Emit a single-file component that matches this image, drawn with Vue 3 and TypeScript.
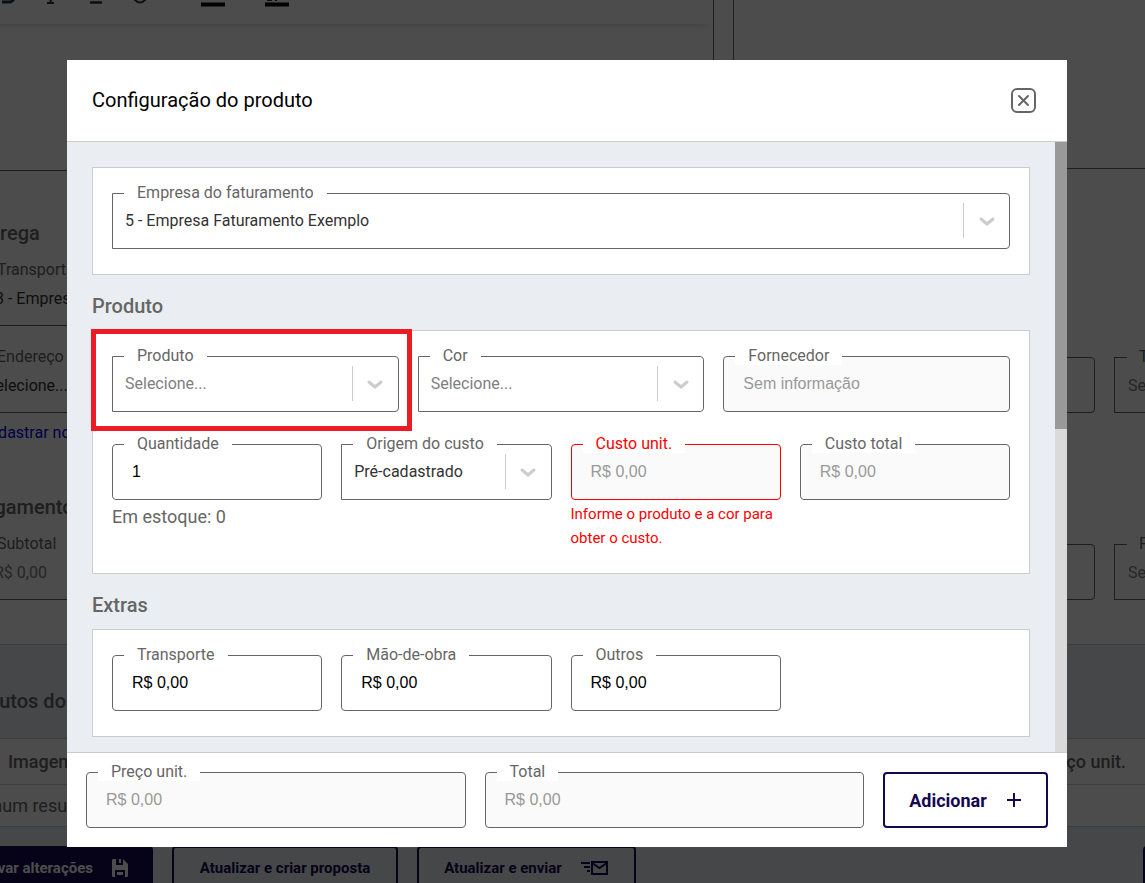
<script setup lang="ts">
import { ref } from 'vue'

interface Field {
  id: string
  label: string
  value: string
  kind: 'select' | 'text'
  muted?: boolean
  disabled?: boolean
  error?: string
  hint?: string
  marked?: boolean
}

const company: Field[] = [
  { id: 'company', label: 'Empresa do faturamento', value: '5 - Empresa Faturamento Exemplo', kind: 'select' },
]
const product: Field[] = [
  { id: 'product', label: 'Produto', value: 'Selecione...', kind: 'select', muted: true, marked: true },
  { id: 'color', label: 'Cor', value: 'Selecione...', kind: 'select', muted: true },
  { id: 'supplier', label: 'Fornecedor', value: 'Sem informação', kind: 'text', disabled: true },
]
const cost: Field[] = [
  { id: 'quantity', label: 'Quantidade', value: '1', kind: 'text', hint: 'Em estoque: 0' },
  { id: 'origin', label: 'Origem do custo', value: 'Pré-cadastrado', kind: 'select' },
  {
    id: 'unit-cost',
    label: 'Custo unit.',
    value: 'R$ 0,00',
    kind: 'text',
    disabled: true,
    error: 'Informe o produto e a cor para obter o custo.',
  },
  { id: 'total-cost', label: 'Custo total', value: 'R$ 0,00', kind: 'text', disabled: true },
]
const extras: Field[] = [
  { id: 'freight', label: 'Transporte', value: 'R$ 0,00', kind: 'text' },
  { id: 'labor', label: 'Mão-de-obra', value: 'R$ 0,00', kind: 'text' },
  { id: 'others', label: 'Outros', value: 'R$ 0,00', kind: 'text' },
]
const totals: Field[] = [
  { id: 'unit-price', label: 'Preço unit.', value: 'R$ 0,00', kind: 'text', disabled: true },
  { id: 'total', label: 'Total', value: 'R$ 0,00', kind: 'text', disabled: true },
]

const sections = [
  { title: '', rows: [{ cols: 'one', fields: company }] },
  { title: 'Produto', rows: [{ cols: 'three', fields: product }, { cols: 'four', fields: cost }] },
  { title: 'Extras', rows: [{ cols: 'four', fields: extras }] },
]

const open = ref(true)
</script>

<template>
  <div class="screen">
    <main class="page">
      <div class="editors">
        <div class="editor">
          <div class="toolbar">
            <svg width="300" height="24" viewBox="0 0 300 24" fill="none" stroke="#2b3640" stroke-width="2">
              <path d="M2 2h8q4-1 4-5" stroke-width="3" />
              <path d="M47 3h7M50 3l2-6" />
              <path d="M90 2.500h12" stroke-width="2.500" />
              <path d="M134-1q6 7 12 0" />
              <path d="M201 4.500h24M265 4.500h24" stroke="#000" stroke-width="4" />
              <path d="M267 0h5M275 0h2" />
            </svg>
          </div>
        </div>
        <div class="editor side"></div>
      </div>

      <section class="delivery">
        <h2>Entrega</h2>
        <div class="back-row">
          <div class="back-field wide"><span class="tag">Transportadora</span><span>13 - Empresa</span></div>
        </div>
        <div class="back-row">
          <div class="back-field"><span class="tag">Endereço</span><span>Selecione...</span></div>
          <div class="back-field narrow"><span class="tag">Tipo</span><span class="soft">Selecione...</span></div>
        </div>
        <a href="#">Cadastrar novo endereço</a>
      </section>

      <section class="payment">
        <h2>Pagamento</h2>
        <div class="back-row">
          <div class="back-field"><span class="tag">Subtotal</span><span class="soft money">R$ 0,00</span></div>
          <div class="back-field narrow"><span class="tag">Forma</span><span class="soft">Selecione...</span></div>
        </div>
      </section>

      <section class="items">
        <h2>Produtos do orçamento</h2>
        <table>
          <thead>
            <tr><th>Imagem</th><th class="end">Preço unit.</th></tr>
          </thead>
          <tbody>
            <tr><td colspan="2">Nenhum resultado</td></tr>
          </tbody>
        </table>
        <div class="actions">
          <button type="button" class="act filled">
            Salvar alterações
            <svg width="16" height="18" viewBox="0 0 16 18">
              <path fill="#fff" fill-rule="evenodd" d="M1 0h10l5 5v12q0 1-1 1H1q-1 0-1-1V1q0-1 1-1zM4 0v6h7V0H9v4H7V0zM3 18h10v-7H3zM5 13h6v3H5z" />
            </svg>
          </button>
          <button type="button" class="act proposal">Atualizar e criar proposta</button>
          <button type="button" class="act send">
            Atualizar e enviar
            <svg width="28" height="16" viewBox="0 0 28 16" fill="none" stroke="#150850" stroke-width="2">
              <path d="M11 2h15v12H11zM11 3l7.500 5L26 3M0 3h9M3 7h6M6 11h3" />
            </svg>
          </button>
          <button type="button" class="act last">Cancelar</button>
        </div>
      </section>
    </main>

    <div v-if="open" class="overlay">
      <div class="modal" role="dialog" aria-labelledby="modal-title">
        <header>
          <h1 id="modal-title">Configuração do produto</h1>
          <button type="button" class="close" aria-label="Fechar" @click="open = false">
            <svg width="25" height="25" viewBox="0 0 25 25" fill="none" stroke="#666" stroke-width="2">
              <rect x="1" y="1" width="23" height="23" rx="5" />
              <path d="M8 8l9 9M17 8l-9 9" stroke-linecap="round" />
            </svg>
          </button>
        </header>

        <div class="body">
          <div class="content">
            <template v-for="section in sections" :key="section.title">
              <h2 v-if="section.title" class="section-title">{{ section.title }}</h2>
              <div class="card">
                <div v-for="(row, i) in section.rows" :key="i" class="row" :class="row.cols">
                  <div v-for="f in row.fields" :key="f.id" class="cell">
                    <div class="field" :class="[f.kind, { disabled: f.disabled, error: f.error }]">
                      <label :for="f.id">{{ f.label }}</label>
                      <template v-if="f.kind === 'select'">
                        <select :id="f.id" :class="{ muted: f.muted }">
                          <option>{{ f.value }}</option>
                        </select>
                        <span class="indicator">
                          <svg width="20" height="20" viewBox="0 0 20 20" fill="none" stroke="#ccc" stroke-width="3" stroke-linecap="round">
                            <path d="M4 8l6 5l6-5" />
                          </svg>
                        </span>
                      </template>
                      <input v-else :id="f.id" type="text" :value="f.value" :disabled="f.disabled" />
                    </div>
                    <p v-if="f.error" class="error-text">{{ f.error }}</p>
                    <p v-if="f.hint" class="hint">{{ f.hint }}</p>
                    <div v-if="f.marked" class="marker"></div>
                  </div>
                </div>
              </div>
            </template>
          </div>
          <div class="scrollbar"><div class="thumb"></div></div>
        </div>

        <footer>
          <div v-for="f in totals" :key="f.id" class="field text disabled">
            <label :for="f.id">{{ f.label }}</label>
            <input :id="f.id" type="text" :value="f.value" disabled />
          </div>
          <button type="button" class="add">
            Adicionar
            <svg width="16" height="16" viewBox="0 0 16 16" stroke="#150850" stroke-width="2">
              <path d="M8 1v14M1 8h14" />
            </svg>
          </button>
        </footer>
      </div>
    </div>
  </div>
</template>

<style>
body {
  margin: 0;
  overflow: hidden;
}
</style>

<style scoped>
* {
  box-sizing: border-box;
}
.screen {
  position: relative;
  height: 100vh;
  overflow: hidden;
  background: #fff;
  color: #666;
  font-family: Roboto, "Liberation Sans", sans-serif;
  font-size: 16px;
}
h1,
h2,
p {
  margin: 0;
}
button {
  font-family: inherit;
  cursor: pointer;
}

/* page under the dialog */
.page {
  margin-left: -28px;
}
.editors {
  display: flex;
  gap: 19px;
  align-items: flex-start;
}
.editor {
  width: 742px;
  height: 171px;
  border: 1px solid #666;
  border-top: 0;
}
.editor.side {
  flex: 1;
  height: 169px;
  border-right: 0;
}
.toolbar {
  height: 24px;
  padding-left: 27px;
  box-shadow: 0 4px 10px -4px rgba(0, 0, 0, 0.2);
}
.toolbar svg {
  display: block;
}
.page h2 {
  margin-bottom: 25px;
  font-size: 20px;
  font-weight: 500;
  line-height: 24px;
}
.delivery {
  padding-top: 50px;
}
.back-row {
  display: flex;
  gap: 19px;
  margin-bottom: 31px;
}
.back-field {
  position: relative;
  flex: 1;
  min-width: 0;
  height: 56px;
  padding: 18px 13px;
  border: 1px solid #666;
  border-radius: 4px;
  line-height: 20px;
  color: #333;
  white-space: nowrap;
}
.back-field .tag {
  position: absolute;
  top: -11px;
  left: 12px;
  padding: 0 12px;
  background: #fff;
  color: #666;
}
.back-field.wide {
  flex: 0 1 50%;
}
.back-field.narrow {
  flex: 0 0 31px;
  border-right: 0;
  border-radius: 0;
}
.soft {
  color: #808080;
}
.money {
  padding-left: 8px;
}
.delivery a {
  display: block;
  margin-top: -21px;
  padding-left: 7px;
  line-height: 20px;
  color: #00e;
  text-decoration: none;
}
.delivery h2,
.payment h2 {
  margin-left: -1px;
}
.payment {
  padding-top: 52px;
}
.payment .back-row {
  margin-bottom: 44px;
}
.items {
  padding-top: 44px;
  border-top: 1px solid #ccc;
  background: #eaeef3;
}
.items h2 {
  margin-left: -15px;
}
table {
  width: 100%;
  border-collapse: collapse;
  background: #fff;
}
th,
td {
  height: 46px;
  padding: 0 0 0 36px;
  border: solid #ccc;
  border-width: 1px 0;
  text-align: left;
  font-size: 18px;
  font-weight: 500;
}
th.end {
  padding: 0 19px 0 0;
  text-align: right;
}
td {
  height: 42px;
  padding-left: 0;
  font-weight: 400;
  text-indent: -12px;
}
.actions {
  display: flex;
  gap: 19px;
  margin-top: 19px;
}
.act {
  display: flex;
  align-items: center;
  justify-content: center;
  gap: 19px;
  flex: none;
  height: 44px;
  padding: 0;
  border: 2px solid #150850;
  border-radius: 4px;
  background: transparent;
  color: #150850;
  font-size: 15px;
  font-weight: 700;
  white-space: nowrap;
}
.act.filled {
  justify-content: flex-end;
  width: 181px;
  padding-right: 23px;
  background: #150850;
  color: #fff;
}
.act.proposal {
  width: 226px;
}
.act.send {
  width: 219px;
}
.act.last {
  width: 120px;
  margin-left: auto;
  margin-right: -118px;
}

/* dialog */
.overlay {
  position: absolute;
  inset: 0;
  display: flex;
  padding: 60px 78px 36px 67px;
  background: rgba(0, 0, 0, 0.7);
}
.modal {
  display: flex;
  flex: 1;
  flex-direction: column;
  min-width: 0;
  background: #fff;
}
header {
  display: flex;
  flex: none;
  align-items: center;
  justify-content: space-between;
  height: 82px;
  padding: 0 31px 1px 25px;
  border-bottom: 1px solid #ccc;
}
h1 {
  color: #000;
  font-size: 20px;
  font-weight: 400;
  line-height: 24px;
}
.close {
  width: 25px;
  height: 25px;
  padding: 0;
  border: 0;
  background: none;
}
.close svg {
  display: block;
}
.body {
  display: flex;
  flex: 1;
  min-height: 0;
  overflow: hidden;
  background: #eaeef3;
}
.content {
  flex: 1;
  padding: 25px;
}
.scrollbar {
  width: 12px;
  background: #dadada;
}
.thumb {
  height: 47%;
  background: #999;
}
.section-title {
  padding: 19px 0 12px;
  font-size: 20px;
  font-weight: 500;
  line-height: 24px;
}
.card {
  display: grid;
  gap: 32px;
  padding: 25px 19px;
  border: 1px solid #ccc;
  background: #fff;
}
.row {
  display: grid;
  gap: 19px;
}
.three {
  grid-template-columns: repeat(3, 1fr);
}
.four {
  grid-template-columns: repeat(4, 1fr);
}
.cell {
  position: relative;
}
.field {
  position: relative;
  height: 56px;
  border: 1px solid #666;
  border-radius: 4px;
  background: #fff;
}
.field.select {
  border-radius: 0 4px 4px 0;
}
.field.disabled {
  background: #fafafa;
}
.field label {
  position: absolute;
  top: -11px;
  left: 11px;
  padding: 0 13px;
  background: #fff;
  line-height: 19px;
  white-space: nowrap;
}
.field input,
.field select {
  display: block;
  width: 100%;
  height: 53px;
  padding: 0 19px;
  border: 0;
  outline: 0;
  background: transparent;
  color: #000;
  font-family: Roboto, "Liberation Sans", sans-serif;
  font-size: 16px;
}
.field input {
  font-family: "Liberation Sans", Arial, sans-serif;
}
.field select {
  padding: 0 48px 0 12px;
  appearance: none;
  color: #333;
}
.field select.muted {
  color: #808080;
}
.field input:disabled {
  color: #999;
}
.indicator {
  position: absolute;
  top: 9px;
  right: 0;
  display: flex;
  align-items: center;
  justify-content: center;
  width: 46px;
  height: 35px;
  border-left: 1px solid #ccc;
  pointer-events: none;
}
.field.error {
  border-color: #f00;
}
.field.error label,
.error-text {
  color: #f00;
}
.error-text {
  margin-bottom: -2px;
  padding-top: 2px;
  font-size: 15px;
  line-height: 24px;
}
.hint {
  padding-top: 5px;
  font-size: 18px;
  line-height: 24px;
}
.marker {
  position: absolute;
  inset: -27px -13px -19px -21px;
  border: 5px solid #ed1c24;
  pointer-events: none;
}
footer {
  display: flex;
  flex: none;
  gap: 19px;
  padding: 19px;
  border-top: 1px solid #ccc;
}
footer .field {
  flex: 1;
}
.add {
  display: flex;
  align-items: center;
  justify-content: center;
  gap: 19px;
  width: 165px;
  padding: 0;
  border: 2px solid #150850;
  border-radius: 4px;
  background: #fff;
  color: #150850;
  font-size: 18px;
  font-weight: 700;
}
</style>
